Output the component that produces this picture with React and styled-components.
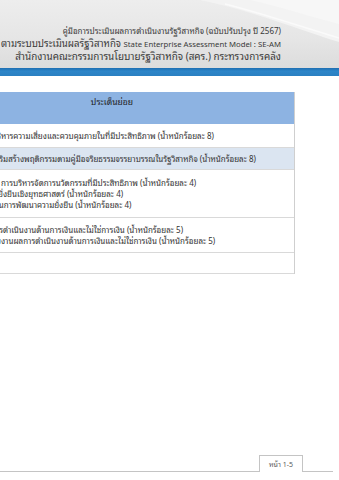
import React from "react";
import styled, { createGlobalStyle } from "styled-components";

const Global = createGlobalStyle`
  html, body { margin: 0; padding: 0; background: #ffffff; }
  body { font-family: "Noto Sans Thai Looped", "Noto Sans Thai", "Noto Sans", sans-serif; }
`;

const Page = styled.div`
  width: 339px;
  height: 480px;
  display: flex;
  flex-direction: column;
  overflow: hidden;
  background: #fff;
`;

const Header = styled.header`
  position: relative;
  height: 68px;
  background: linear-gradient(180deg, #ededed 0%, #e5e5e5 60%, #dcdcdc 100%);
  display: flex;
  flex-direction: column;
  align-items: flex-end;
  padding: 25px 58px 0 0;
  box-sizing: border-box;
`;

const Swoosh = styled.svg`
  position: absolute;
  top: 0;
  right: 0;
  width: 339px;
  height: 68px;
`;

const HeadLine = styled.div`
  position: relative;
  font-size: ${(p) => p.$size || 9.9}px;
  line-height: 11.5px;
  color: #3a3a3a;
  white-space: nowrap;
`;

const Latin = styled.span`
  font-family: "Noto Sans", sans-serif;
  font-size: 7.75px;
`;

const BlueBar = styled.div`
  height: 8px;
  background: linear-gradient(180deg, #1f6fb2 0%, #2d85c8 40%, #2b80c2 100%);
`;

const Table = styled.div`
  margin: 16px 0 0 -70px;
  width: 365px;
  border-right: 1px solid #cfcfcf;
  box-sizing: border-box;
`;

const HeadCell = styled.div`
  height: 32px;
  background: #8db3e2;
  text-align: center;
  font-size: 8.6px;
  line-height: 12px;
  padding-top: 3px;
  box-sizing: border-box;
  color: #1e1e1e;
`;

const Row = styled.div`
  background: ${(p) => p.$bg || "#ffffff"};
  border-bottom: 1px solid #d9d9d9;
  padding: ${(p) => p.$pad}px 0 ${(p) => p.$pad}px 70px;
  min-height: ${(p) => p.$min || 0}px;
  box-sizing: border-box;
  overflow: hidden;
`;

const Line = styled.div`
  font-size: 8px;
  line-height: 11px;
  color: #333;
  white-space: nowrap;
  margin-left: ${(p) => p.$shift || 0}px;
`;

const Footer = styled.footer`
  margin: auto 6px 8px 0;
  display: flex;
  align-items: flex-end;
`;

const Rule = styled.div`
  flex: ${(p) => (p.$grow ? 1 : "none")};
  width: ${(p) => p.$w || 0}px;
  border-bottom: 1px solid #c4c4c4;
`;

const Tab = styled.div`
  width: 44px;
  height: 17px;
  border: 1px solid #c4c4c4;
  border-bottom: none;
  box-sizing: border-box;
  font-size: 7px;
  line-height: 15px;
  text-align: center;
  color: #5a5a5a;
`;

const rows = [
  { pad: 6, lines: [["บริหารความเสี่ยงและควบคุมภายในที่มีประสิทธิภาพ (น้ำหนักร้อยละ 8)", -8]] },
  { pad: 5, bg: "#dbe5f1", lines: [["เสริมสร้างพฤติกรรมตามคู่มือจริยธรรมจรรยาบรรณในรัฐวิสาหกิจ (น้ำหนักร้อยละ 8)", -8]] },
  {
    pad: 7,
    lines: [
      ["การบริหารจัดการนวัตกรรมที่มีประสิทธิภาพ (น้ำหนักร้อยละ 4)", 1],
      ["ยั่งยืนเชิงยุทธศาสตร์ (น้ำหนักร้อยละ 4)", -2],
      ["ในการพัฒนาความยั่งยืน (น้ำหนักร้อยละ 4)", -4],
    ],
  },
  {
    pad: 6,
    lines: [
      ["การดำเนินงานด้านการเงินและไม่ใช่การเงิน (น้ำหนักร้อยละ 5)", -9],
      ["ยงานผลการดำเนินงานด้านการเงินและไม่ใช่การเงิน (น้ำหนักร้อยละ 5)", -4],
    ],
  },
  { pad: 0, min: 21, lines: [] },
];

export default function App() {
  return (
    <Page>
      <Global />
      <Header>
        <Swoosh viewBox="0 0 339 68" preserveAspectRatio="none">
          <path d="M200 0 C 250 10, 300 30, 339 42 L 339 0 Z" fill="#f3f3f3" />
          <path d="M225 4 C 265 14, 305 28, 339 38" stroke="#fafafa" strokeWidth="1.5" fill="none" />
          <path d="M250 0 C 285 8, 315 18, 339 24 L 339 0 Z" fill="#f7f7f7" />
        </Swoosh>
        <HeadLine $size={8}>คู่มือการประเมินผลการดำเนินงานรัฐวิสาหกิจ (ฉบับปรับปรุง ปี 2567)</HeadLine>
        <HeadLine $size={9.65}>
          ตามระบบประเมินผลรัฐวิสาหกิจ <Latin>State Enterprise Assessment Model : SE-AM</Latin>
        </HeadLine>
        <HeadLine $size={9.9}>สำนักงานคณะกรรมการนโยบายรัฐวิสาหกิจ (สคร.) กระทรวงการคลัง</HeadLine>
      </Header>
      <BlueBar />
      <Table>
        <HeadCell>ประเด็นย่อย</HeadCell>
        {rows.map((r, i) => (
          <Row key={i} $pad={r.pad} $bg={r.bg} $min={r.min}>
            {r.lines.map(([t, s], j) => (
              <Line key={j} $shift={s}>{t}</Line>
            ))}
          </Row>
        ))}
      </Table>
      <Footer>
        <Rule $grow />
        <Tab>หน้า 1-5</Tab>
        <Rule $w={30} />
      </Footer>
    </Page>
  );
}
